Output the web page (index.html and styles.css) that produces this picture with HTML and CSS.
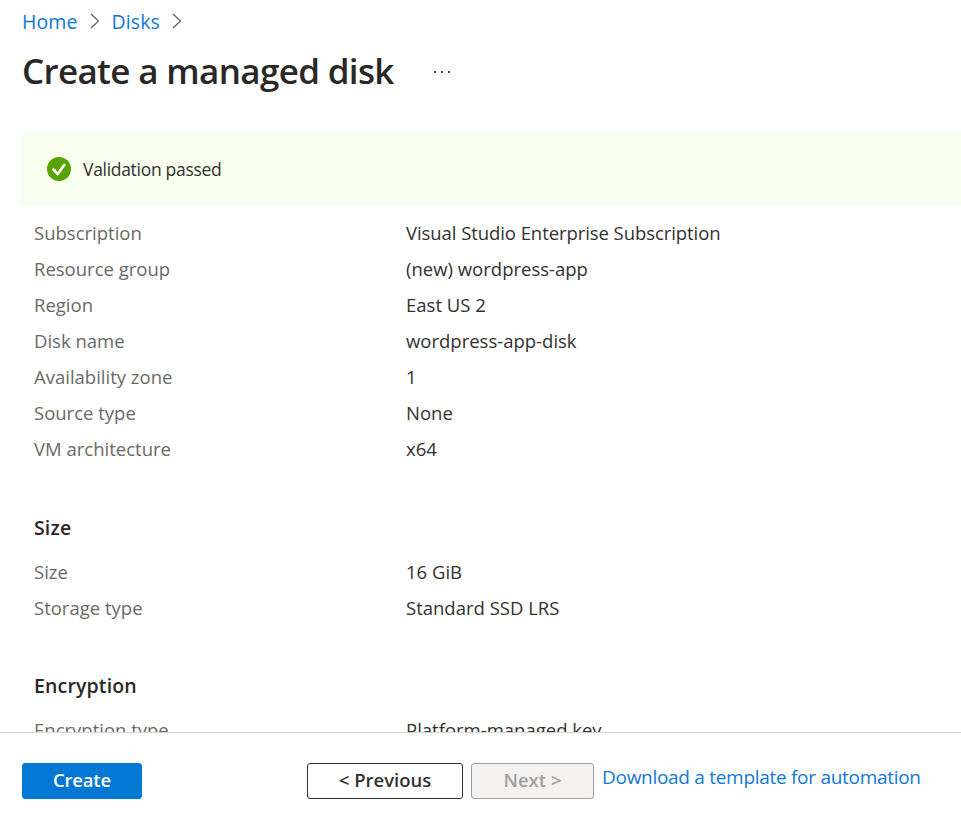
FILE: index.html
```html
<!DOCTYPE html>
<html lang="en">
<head>
<meta charset="utf-8">
<title>Create a managed disk</title>
<link rel="stylesheet" href="styles.css">
</head>
<body>
<div class="page">
  <nav class="crumbs">
    <a>Home</a>
    <svg class="chevron" width="10" height="16" viewBox="0 0 10 16"><path d="M1 1l7.5 7L1 15"/></svg>
    <a>Disks</a>
    <svg class="chevron" width="10" height="16" viewBox="0 0 10 16"><path d="M1 1l7.5 7L1 15"/></svg>
  </nav>
  <header class="title-bar">
    <h1>Create a managed disk</h1>
    <svg class="more" width="18" height="4" viewBox="0 0 18 4"><path d="M1 1h2v2H1zM8 1h2v2H8zM15 1h2v2h-2z"/></svg>
  </header>
  <div class="banner">
    <svg width="24" height="24" viewBox="0 0 24 24"><circle cx="12" cy="12" r="12" fill="#57a300"/><path d="M6.500 12.500l4.200 4.500L17.300 8" fill="none" stroke="#fff" stroke-width="2.700" stroke-linecap="round"/></svg>
    <span>Validation passed</span>
  </div>
  <main class="review">
    <dl>
      <dt>Subscription</dt><dd class="tight">Visual Studio Enterprise Subscription</dd>
      <dt>Resource group</dt><dd>(new) wordpress-app</dd>
      <dt>Region</dt><dd>East US 2</dd>
      <dt>Disk name</dt><dd>wordpress-app-disk</dd>
      <dt>Availability zone</dt><dd>1</dd>
      <dt>Source type</dt><dd>None</dd>
      <dt>VM architecture</dt><dd>x64</dd>
    </dl>
    <h2>Size</h2>
    <dl>
      <dt>Size</dt><dd>16 GiB</dd>
      <dt>Storage type</dt><dd>Standard SSD LRS</dd>
    </dl>
    <h2 class="encryption">Encryption</h2>
    <dl>
      <dt>Encryption type</dt><dd>Platform-managed key</dd>
    </dl>
  </main>
  <footer class="actions">
    <button class="btn primary">Create</button>
    <button class="btn previous">&lt; Previous</button>
    <button class="btn next" disabled>Next &gt;</button>
    <a class="download">Download a template for automation</a>
  </footer>
</div>
</body>
</html>
```

FILE: styles.css
```css
* { box-sizing: border-box; }
body { margin: 0; background: #fff; color: #323130; font-family: "Open Sans", "Noto Sans", sans-serif; font-size: 18.5px; }
.page { height: 814px; display: flex; flex-direction: column; overflow: hidden; }
.crumbs { height: 44px; flex: none; padding: 0 0 2px 22px; display: flex; align-items: center; font-size: 19.5px; color: #0f78d4; }
.crumbs a { letter-spacing: 0.1px; }
.chevron { margin: 0 12px 0 12px; fill: none; stroke: #605e5c; stroke-width: 1.2; }
.title-bar { height: 88px; flex: none; padding-left: 22px; display: flex; align-items: flex-start; }
h1 { margin: 0; font-size: 35px; line-height: 54px; font-weight: 600; letter-spacing: -0.66px; color: #292827; white-space: nowrap; width: 411px; }
.more { margin-top: 26px; fill: #484644; }
.banner { height: 74px; flex: none; margin-left: 22px; padding-left: 25px; background: #f8ffee; display: flex; align-items: center; gap: 12px; font-size: 17.5px; letter-spacing: -0.3px; }
.review { flex: 1; min-height: 0; overflow: hidden; padding: 9px 0 0 34px; }
dl { margin: 0; display: grid; grid-template-columns: 372px 1fr; grid-auto-rows: 36px; line-height: 36px; white-space: nowrap; }
dt { color: #6b6967; }
dd { margin: 0; }
.tight { letter-spacing: -0.07px; }
h2 { margin: 43px 0 9px; font-size: 19.5px; line-height: 35px; font-weight: 600; letter-spacing: 0.15px; color: #292827; }
.encryption { margin-top: 42px; }
.actions { height: 82px; flex: none; border-top: 1px solid #d6d6d6; padding: 30px 0 0 22px; display: flex; align-items: flex-start; background: #fff; }
.btn { height: 36px; padding: 0 0 2px; border: 1px solid #323130; border-radius: 3px; background: #fff; color: #323130; font: 600 18.5px/30px "Open Sans", "Noto Sans", sans-serif; }
.primary { width: 120px; margin-right: 165px; background: #0078d4; border-color: #0078d4; color: #fff; letter-spacing: -0.2px; }
.previous { width: 156px; margin-right: 8px; }
.next { width: 123px; margin-right: 8px; background: #f3f2f1; border-color: #a19f9d; color: #a19f9d; }
.download { color: #0f78d4; font-size: 19px; line-height: 29px; letter-spacing: -0.29px; white-space: nowrap; }
```
